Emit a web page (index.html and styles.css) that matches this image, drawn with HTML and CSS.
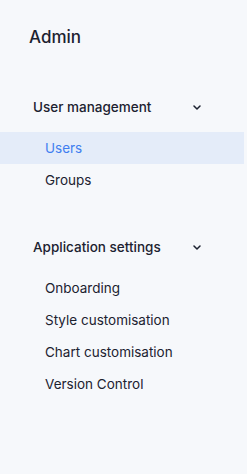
FILE: index.html
```html
<!DOCTYPE html>
<html lang="en">
<head>
    <meta charset="UTF-8">
    <meta name="viewport" content="width=device-width, initial-scale=1.0">
    <title>Admin</title>
    <link rel="stylesheet" href="styles.css">
</head>
<body>
    <nav class="sidebar">
        <h1 class="sidebar-title">Admin</h1>

        <div class="nav-section">
            <div class="nav-header">
                <span>User management</span>
                <svg class="chevron" width="8" height="5" viewBox="0 0 8 5"><polyline points="1,1 4,4 7,1" fill="none" stroke="#1c2230" stroke-width="1.5" stroke-linecap="round" stroke-linejoin="round"/></svg>
            </div>
            <ul class="nav-list">
                <li class="nav-item active">Users</li>
                <li class="nav-item">Groups</li>
            </ul>
        </div>

        <div class="nav-section">
            <div class="nav-header">
                <span>Application settings</span>
                <svg class="chevron" width="8" height="5" viewBox="0 0 8 5"><polyline points="1,1 4,4 7,1" fill="none" stroke="#1c2230" stroke-width="1.5" stroke-linecap="round" stroke-linejoin="round"/></svg>
            </div>
            <ul class="nav-list">
                <li class="nav-item">Onboarding</li>
                <li class="nav-item">Style customisation</li>
                <li class="nav-item">Chart customisation</li>
                <li class="nav-item">Version Control</li>
            </ul>
        </div>
    </nav>
</body>
</html>
```

FILE: styles.css
```css
body {
    font-family: Inter, 'Noto Sans', sans-serif;
    margin: 0;
    padding: 0;
    background-color: #f6f8fb;
    color: #1c2230;
}
.sidebar {
    width: 244px;
    height: 474px;
    padding-top: 25px;
    box-sizing: border-box;
}
.sidebar-title {
    margin: 0 0 41px;
    padding-left: 29px;
    font-size: 17px;
    font-weight: 500;
    line-height: 24px;
}
.nav-section {
    margin-bottom: 34px;
}
.nav-header {
    display: flex;
    align-items: center;
    justify-content: space-between;
    height: 34px;
    padding: 0 43px 0 33px;
    font-size: 13.5px;
    font-weight: 500;
}
.chevron {
    display: block;
}
.nav-list {
    list-style: none;
    margin: 8px 0 0;
    padding: 0;
}
.nav-item {
    height: 32px;
    line-height: 32px;
    padding-left: 45px;
    font-size: 13.5px;
}
.nav-item.active {
    background-color: #e4ecf9;
    color: #3f7ef0;
}
```
